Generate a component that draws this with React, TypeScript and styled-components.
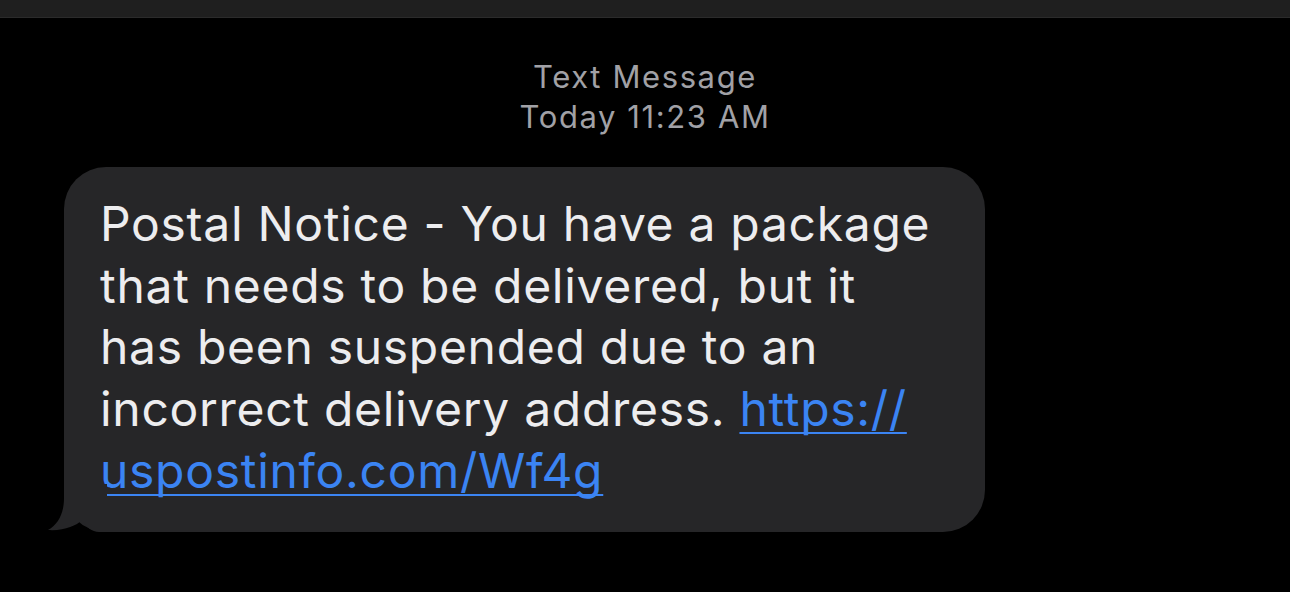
import styled, { createGlobalStyle } from 'styled-components';

const GlobalStyle = createGlobalStyle`
	html, body {
		margin: 0;
		padding: 0;
		background: #000;
	}
	body {
		font-family: Inter, 'Liberation Sans', sans-serif;
		-webkit-font-smoothing: antialiased;
	}
`;

const Screen = styled.div`
	width: 1290px;
	height: 592px;
	background: #000;
	overflow: hidden;
	display: flex;
	flex-direction: column;
`;

const TopBar = styled.div`
	height: 17px;
	background: #1f1f1f;
	border-bottom: 1px solid #2b2b2b;
`;

const Thread = styled.div`
	display: flex;
	flex-direction: column;
	padding: 0 0 0 64px;
`;

const Stamp = styled.div`
	margin: 39px 0 0 -64px;
	text-align: center;
	color: #a1a1a6;
	font-size: 31px;
	line-height: 40px;
	letter-spacing: 1.6px;
`;

const Bubble = styled.div`
	position: relative;
	margin-top: 30px;
	width: 921px;
	box-sizing: border-box;
	padding: 26px 20px 30px 36px;
	background: #262628;
	border-radius: 42px;
	color: #ededef;
	font-size: 48px;
	line-height: 61.7px;
	letter-spacing: 0.7px;
`;

const Tail = styled.svg`
	position: absolute;
	left: -17px;
	bottom: 0;
	width: 60px;
	height: 48px;
`;

const Link = styled.a`
	color: #3b84f3;
	text-decoration: underline;
	text-decoration-thickness: 2px;
	text-decoration-skip-ink: none;
	text-underline-offset: 6px;
`;

const App = () => {
	return (
		<Screen>
			<GlobalStyle />
			<TopBar />
			<Thread>
				<Stamp>
					Text Message
					<br />
					Today 11:23 AM
				</Stamp>
				<Bubble>
					<Tail viewBox='0 0 60 48'>
						<path
							d='M17 0 L60 0 L60 48 L52 48 C45 48 39 43 35 36 C29 42 17 47 1 46 C12 40 17 28 17 14 Z'
							fill='#262628'
						/>
					</Tail>
					Postal Notice - You have a package
					<br />
					that needs to be delivered, but it
					<br />
					has been suspended due to an
					<br />
					incorrect delivery address. <Link href='#'>https://</Link>
					<br />
					<Link href='#'>uspostinfo.com/Wf4g</Link>
				</Bubble>
			</Thread>
		</Screen>
	);
};

export default App;
